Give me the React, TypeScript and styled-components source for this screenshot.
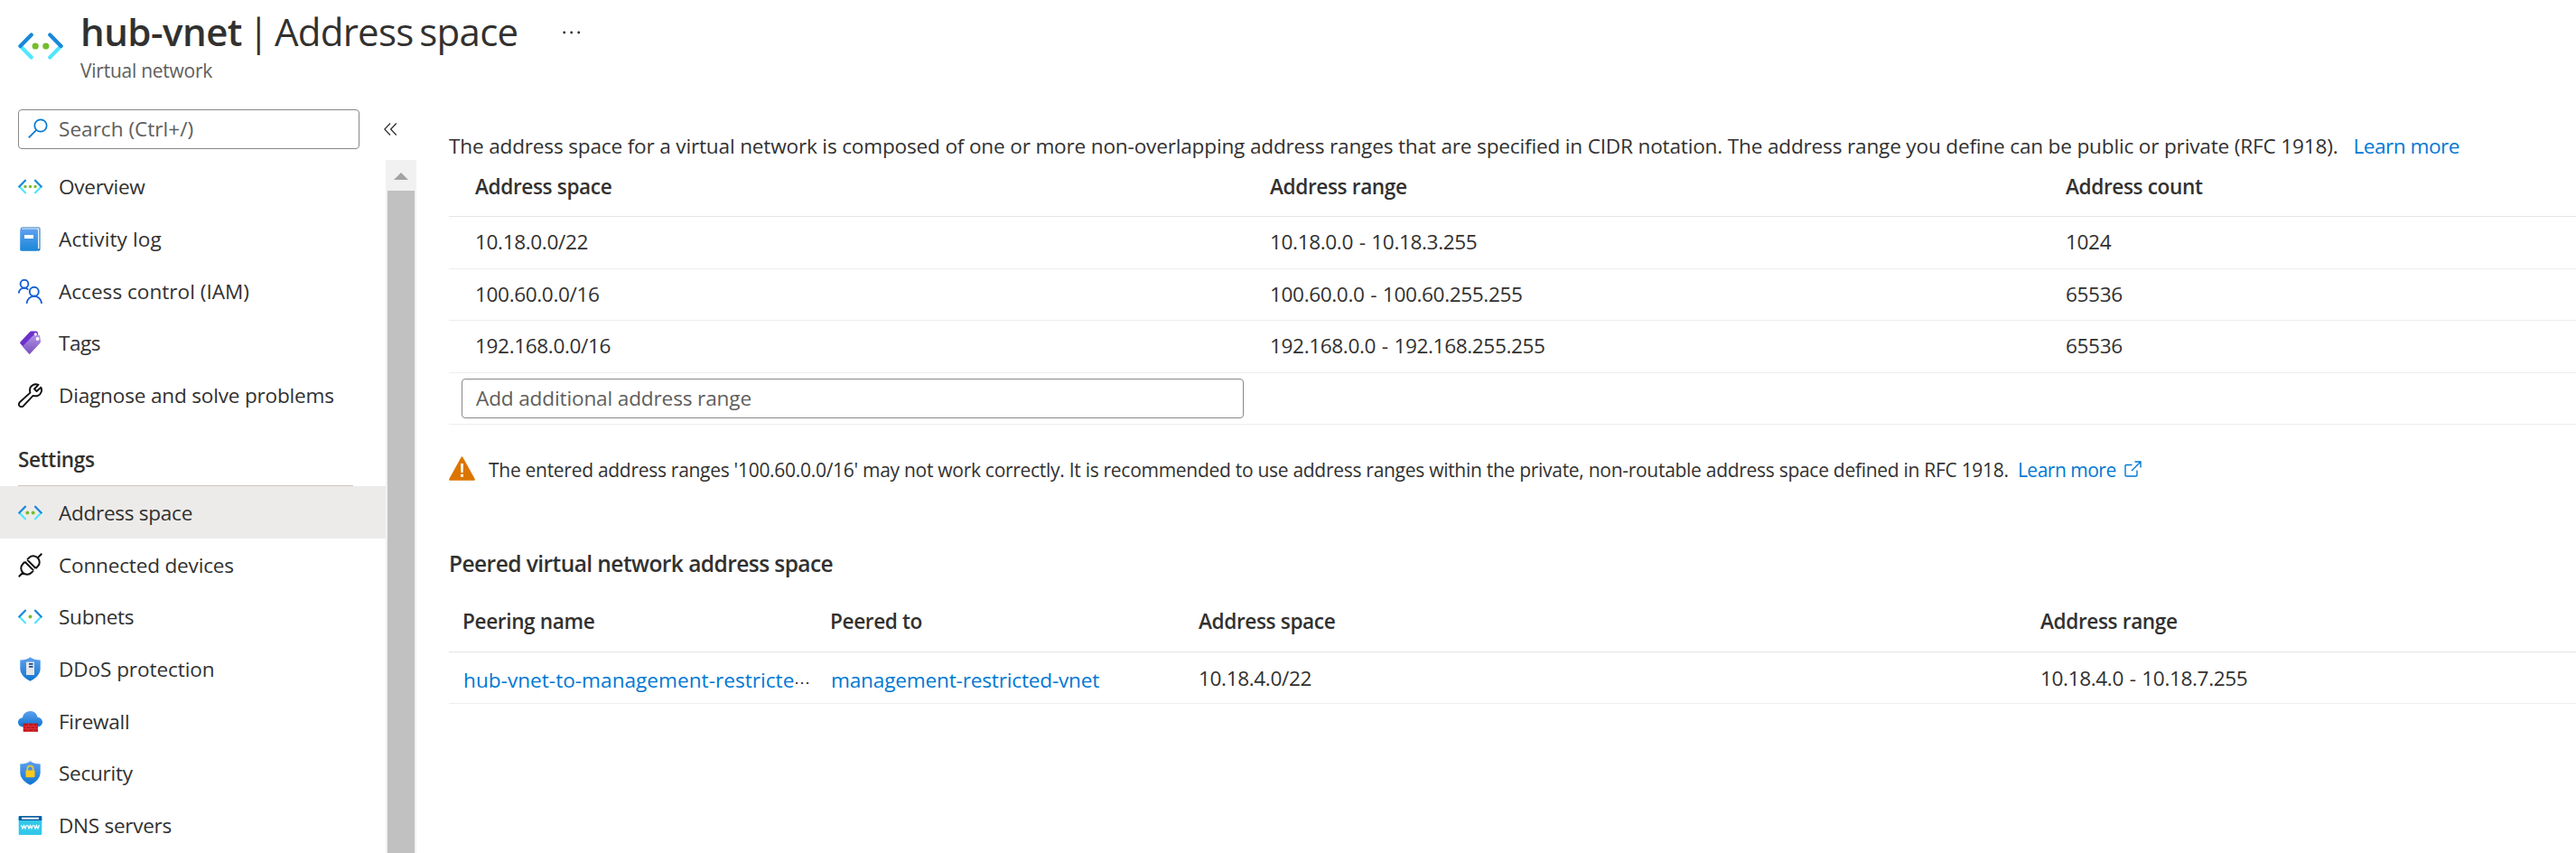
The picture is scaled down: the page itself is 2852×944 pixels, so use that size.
import React from "react";
import styled, { createGlobalStyle } from "styled-components";

const Global = createGlobalStyle`
  * { box-sizing: border-box; }
  body { margin: 0; background: #fff; }
`;

const Page = styled.div`
  width: 2852px;
  height: 944px;
  overflow: hidden;
  display: flex;
  flex-direction: column;
  background: #fff;
  color: #323130;
  font-family: "Open Sans", "Noto Sans", sans-serif;
  font-size: 22.6px;
  letter-spacing: -0.35px;
`;

const Header = styled.header`
  display: flex;
  height: 121px;
  flex: none;
  padding: 8px 0 0 20px;
`;
const HeaderIcon = styled.div`
  width: 69px;
  padding-top: 18px;
  svg { display: block; }
`;
const Titles = styled.div`
  display: flex;
  flex-direction: column;
`;
const Title = styled.h1`
  margin: 0;
  font-size: 42px;
  line-height: 54px;
  font-weight: 400;
  white-space: pre;
  letter-spacing: -0.75px;
  word-spacing: -3.3px;
  b { font-weight: 600; letter-spacing: -0.5px; }
`;
const Subtitle = styled.div`
  font-size: 21px;
  line-height: 28px;
  padding-top: 2px;
  letter-spacing: -0.25px;
  color: #605e5c;
`;
const More = styled.div`
  margin-left: 50px;
  padding-top: 26px;
  svg { display: block; }
`;

const Body = styled.div`
  display: flex;
  flex: 1;
  min-height: 0;
`;
const Sidebar = styled.aside`
  width: 461px;
  flex: none;
  display: flex;
  flex-direction: column;
`;
const SearchRow = styled.div`
  display: flex;
  align-items: center;
  height: 56px;
  padding: 0 0 12px 20px;
  gap: 27px;
`;
const SearchBox = styled.div`
  width: 378px;
  height: 44px;
  border: 1.5px solid #8a8886;
  border-radius: 4px;
  display: flex;
  align-items: center;
  gap: 12px;
  padding: 0 0 2px 10px;
  letter-spacing: 0;
  color: #605e5c;
`;
const NavWrap = styled.div`
  display: flex;
  flex: 1;
  min-height: 0;
`;
const Nav = styled.nav`
  width: 427px;
  padding-top: 1px;
`;
const NavItem = styled.div<{ $active?: boolean; $ls?: number }>`
  display: flex;
  align-items: center;
  gap: 18px;
  height: 57.65px;
  padding-left: 20px;
  letter-spacing: ${(p) => p.$ls ?? -0.3}px;
  background: ${(p) => (p.$active ? "#edebe9" : "transparent")};
  svg { flex: none; }
`;
const Section = styled.div`
  height: 72px;
  margin: 0 36px 0 20px;
  padding-top: 27px;
  line-height: 32px;
  font-weight: 600;
  border-bottom: 1.5px solid #c8c6c4;
`;
const SettingsItem = styled(NavItem)`
  padding-top: 1px;
`;
const Scrollbar = styled.div`
  width: 34px;
  background: #f1f1f1;
  display: flex;
  flex-direction: column;
  padding: 0 2px;
`;
const ScrollArrow = styled.div`
  height: 34px;
  flex: none;
  display: flex;
  justify-content: center;
  padding-top: 14px;
`;
const Thumb = styled.div`
  flex: 1;
  background: #c1c1c1;
`;

const Main = styled.main`
  flex: 1;
  min-width: 0;
  padding: 24px 0 0 36px;
`;
const Text = styled.p<{ $size: number; $ls: number; $top?: number; $bottom?: number }>`
  margin: 0;
  display: flex;
  align-items: center;
  height: 34px;
  padding: ${(p) => p.$top ?? 0}px 0 ${(p) => p.$bottom ?? 0}px;
  white-space: pre;
  font-size: ${(p) => p.$size}px;
  letter-spacing: ${(p) => p.$ls}px;
`;
const Link = styled.a`
  color: #0078d4;
  text-decoration: none;
`;
const MoreLink = styled(Link)`
  letter-spacing: -0.5px;
`;
const Row = styled.div<{ $cols: string; $h: number; $head?: boolean }>`
  display: grid;
  grid-template-columns: ${(p) => p.$cols};
  align-items: center;
  height: ${(p) => p.$h}px;
  border-bottom: 1.5px solid ${(p) => (p.$head ? "#e5e5e5" : "#edeeef")};
  font-weight: ${(p) => (p.$head ? 600 : 400)};
  white-space: nowrap;
`;
const Cell = styled.div<{ $top?: number; $bottom?: number; $link?: boolean }>`
  padding: ${(p) => p.$top ?? 0}px 0 ${(p) => p.$bottom ?? 0}px ${(p) => (p.$link ? 1 : 0)}px;
  letter-spacing: ${(p) => (p.$link ? -0.18 : -0.37)}px;
  word-spacing: 1.2px;
`;
const HeadCell = styled(Cell)`
  word-spacing: 0;
`;
const NameLink = styled(Link)`
  letter-spacing: 0.02px;
`;
const Clip = styled.span`
  font-size: 18px;
`;
const RangeInput = styled.div`
  width: 866px;
  height: 44px;
  margin-left: -15px;
  border: 1.5px solid #8a8886;
  border-radius: 4px;
  padding-left: 15px;
  line-height: 41px;
  letter-spacing: -0.15px;
  color: #605e5c;
`;
const Warning = styled.div`
  display: flex;
  align-items: center;
  gap: 15px;
  margin-top: 30px;
  height: 36px;
`;
const External = styled.span`
  display: inline-flex;
  margin-left: 9px;
`;
const Heading = styled.h2`
  margin: 70px 0 0;
  font-size: 24.5px;
  line-height: 36px;
  font-weight: 600;
  letter-spacing: -0.56px;
`;

const VnetIcon = ({ dots, size = 27 }: { dots: number; size?: number }) => {
  const xs = dots === 1 ? [9] : dots === 2 ? [6.9, 11.1] : [5.3, 9, 12.7];
  return (
    <svg width={size} height={size} viewBox="0 0 18 18" fill="none" strokeWidth="1.5" strokeLinecap="round">
      <path d="M0.9 9 5.3 13.5" stroke="#50e6ff" />
      <path d="M5.3 4.5 0.9 9" stroke="#1988d9" />
      <path d="M17.1 9 12.7 13.5" stroke="#50e6ff" />
      <path d="M12.7 4.5 17.1 9" stroke="#1988d9" />
      {xs.map((x) => (
        <circle key={x} cx={x} cy="9" r={dots === 3 ? 1.1 : 1.3} fill="#76bc2d" />
      ))}
    </svg>
  );
};
const LogIcon = () => (
  <svg width="27" height="27" viewBox="0 0 27 27">
    <defs>
      <linearGradient id="log" x1="0" y1="0" x2="0" y2="1">
        <stop offset="0" stopColor="#5ea0ef" /><stop offset="1" stopColor="#1b87d8" />
      </linearGradient>
    </defs>
    <rect x="3" y="0.5" width="21.5" height="26" rx="1.6" fill="#1a6fb0" />
    <rect x="4" y="1.4" width="19.5" height="23" fill="#e8f4fc" />
    <rect x="2.2" y="2.4" width="19.8" height="24.2" rx="1.4" fill="url(#log)" />
    <rect x="7" y="9" width="10" height="4" fill="#fff" />
  </svg>
);
const PeopleIcon = () => (
  <svg width="27" height="27" viewBox="0 0 27 27" fill="none" stroke="#1560d4" strokeWidth="1.9">
    <circle cx="7" cy="5.2" r="4.4" />
    <path d="M0.9 15.5c0-3.4 2.6-5.7 6-5.7 1.8 0 3.3.6 4.4 1.8" />
    <circle cx="17.8" cy="13.8" r="5" />
    <path d="M9.5 26.8c.4-4.6 3.8-8 8.3-8s7.9 3.4 8.3 8" />
  </svg>
);
const TagIcon = () => (
  <svg width="27" height="27" viewBox="0 0 27 27">
    <defs>
      <linearGradient id="tag" x1="0" y1="0" x2="0" y2="1">
        <stop offset="0" stopColor="#b394e6" /><stop offset="1" stopColor="#7a4fbf" />
      </linearGradient>
    </defs>
    <path d="M13 1.2Q13.6.5 14.5.5L20 .4Q22 .6 22 3V8L8.5 21 2.3 14Q1.8 13.2 2.5 12.5Z" fill="#6d2fcb" />
    <path d="M16.2 5.8Q16.8 5 18 4.9L22.5 4.5Q24 4.5 24.2 6L25 12Q25 13 24.3 13.8L13.3 25.5Q12.6 26.3 12 25.5L5.3 18Q4.9 17.4 5.5 16.8Z" fill="url(#tag)" />
    <circle cx="19.3" cy="3.8" r="1.6" fill="#fff" />
    <circle cx="21.6" cy="9" r="1.9" fill="#fff" />
  </svg>
);
const WrenchIcon = () => (
  <svg width="27" height="27" viewBox="0 0 27 27" fill="none" stroke="#111" strokeWidth="1.9" strokeLinejoin="round">
    <path d="M22.5 1.8C18 .2 13 3 13 7.6C13 9 13.2 9.8 13.4 10.6L2 21C.5 22.5.6 24.4 1.7 25.4C3 26.6 4.8 26.4 6 25.2L16.6 13.9C20 15 24.5 13.8 25.7 9.8C26.3 8 26 6 25.3 4.7L20.6 9L18 6.5Z" />
  </svg>
);
const PlugIcon = () => (
  <svg width="27" height="27" viewBox="0 0 27 27" fill="none" stroke="#111" strokeWidth="2">
    <path d="M.8 26.2 5.5 21.5M21.5 5.5 26.3.8M7.6 9.8 17.2 19.4M10 7.4 19.6 17M7.6 9.8 5 12.5C2.5 15 2.8 19 5.3 21.7 8 24.2 12 24.5 14.5 22L17.2 19.4M10 7.4 12.5 5C15 2.5 19 2.8 21.7 5.3 24.2 8 24.5 12 22 14.5L19.6 17" />
  </svg>
);
const Shield = ({ children }: { children: React.ReactNode }) => (
  <svg width="27" height="27" viewBox="0 0 27 27">
    <defs>
      <linearGradient id="shield" x1="0" y1="0" x2="0" y2="1">
        <stop offset="0" stopColor="#5ea0ef" /><stop offset="1" stopColor="#0f75cf" />
      </linearGradient>
    </defs>
    <path d="M13.5.3C16.5 2.8 20 3.5 24.7 3.5V13C24.7 20 18 24.5 13.5 26.8 9 24.5 2.3 20 2.3 13V3.5C7 3.5 10.5 2.8 13.5.3Z" fill="url(#shield)" />
    {children}
  </svg>
);
const DdosIcon = () => (
  <Shield>
    <rect x="9" y="5.5" width="9" height="14.5" fill="#e6e6e6" />
    <rect x="12" y="7" width="4.5" height="1.7" fill="#114a8b" />
    <rect x="12" y="10" width="4.5" height="1.7" fill="#114a8b" />
  </Shield>
);
const SecurityIcon = () => (
  <Shield>
    <path d="M10.3 11V8.8a3.2 3.2 0 0 1 6.4 0V11" fill="none" stroke="#e8c93a" strokeWidth="1.7" />
    <rect x="8.5" y="10.5" width="10" height="7.8" rx=".8" fill="#fbc91a" />
  </Shield>
);
const FirewallIcon = () => (
  <svg width="27" height="27" viewBox="0 0 27 27">
    <path d="M5.5 19.5C2.3 19.5 0 17.3 0 14.3 0 11.5 2.2 9.5 5 9.2 5.6 5 9 2 13.5 2 17.7 2 20.7 4.6 21.6 8.7 24.7 9 27 11.2 27 14.1 27 17.2 24.5 19.5 21.3 19.5Z" fill="url(#shield)" />
    <rect x="5.7" y="15.6" width="16.3" height="9.2" fill="#c4141b" />
    <path d="M6 18.7H22M6 21.7H22M11.5 15.6V18.7M17 15.6V18.7M9 18.7V21.7M14 18.7V21.7M19 18.7V21.7M11.5 21.7V24.8M17 21.7V24.8" stroke="#e8555a" strokeWidth=".5" />
  </svg>
);
const DnsIcon = () => (
  <svg width="27" height="27" viewBox="0 0 27 27">
    <rect x=".7" y="3" width="25.6" height="21" rx="1" fill="#32c8ea" />
    <path d="M.7 8V4a1 1 0 0 1 1-1H25.3a1 1 0 0 1 1 1V8Z" fill="#0b5fa5" />
    <rect x="4" y="4.7" width="19" height="1.9" fill="#fff" />
    <path d="M3.5 13 5 17 6.500 13.5 8 17 9.5 13M10.5 13 12 17 13.5 13.5 15 17 16.5 13M17.5 13 19 17 20.5 13.5 22 17 23.5 13" fill="none" stroke="#fff" strokeWidth="1.2" />
  </svg>
);

const TOP = [
  { label: "Overview", icon: <VnetIcon dots={3} /> },
  { label: "Activity log", icon: <LogIcon />, ls: 0.1 },
  { label: "Access control (IAM)", icon: <PeopleIcon />, ls: 0 },
  { label: "Tags", icon: <TagIcon />, ls: -0.5 },
  { label: "Diagnose and solve problems", icon: <WrenchIcon />, ls: -0.2 },
];
const SETTINGS = [
  { label: "Address space", icon: <VnetIcon dots={2} />, active: true },
  { label: "Connected devices", icon: <PlugIcon />, ls: -0.2 },
  { label: "Subnets", icon: <VnetIcon dots={1} /> },
  { label: "DDoS protection", icon: <DdosIcon />, ls: -0.1 },
  { label: "Firewall", icon: <FirewallIcon /> },
  { label: "Security", icon: <SecurityIcon /> },
  { label: "DNS servers", icon: <DnsIcon /> },
];
const RANGES = [
  ["10.18.0.0/22", "10.18.0.0 - 10.18.3.255", "1024"],
  ["100.60.0.0/16", "100.60.0.0 - 100.60.255.255", "65536"],
  ["192.168.0.0/16", "192.168.0.0 - 192.168.255.255", "65536"],
];
const SPACE_COLS = "29px 880px 881px 1fr";
const PEER_COLS = "15px 407px 408px 932px 1fr";

export default function App() {
  return (
    <Page>
      <Global />
      <Header>
        <HeaderIcon><VnetIcon dots={2} size={50} /></HeaderIcon>
        <Titles>
          <Title><b>hub-vnet</b> | Address space</Title>
          <Subtitle>Virtual network</Subtitle>
        </Titles>
        <More>
          <svg width="20" height="4" viewBox="0 0 20 4" fill="#323130">
            <circle cx="1.7" cy="2" r="1.4" /><circle cx="9.7" cy="2" r="1.4" /><circle cx="17.7" cy="2" r="1.4" />
          </svg>
        </More>
      </Header>
      <Body>
        <Sidebar>
          <SearchRow>
            <SearchBox>
              <svg width="22" height="22" viewBox="0 0 22 22" fill="none" stroke="#0078d4" strokeWidth="1.7">
                <circle cx="14" cy="8" r="6.7" /><path d="M9.3 12.8.8 21.3" />
              </svg>
              Search (Ctrl+/)
            </SearchBox>
            <svg width="15" height="14" viewBox="0 0 15 14" fill="none" stroke="#323130" strokeWidth="1.3">
              <path d="M7 .5.8 7 7 13.5M13.8.5 7.6 7 13.8 13.5" />
            </svg>
          </SearchRow>
          <NavWrap>
            <Nav>
              {TOP.map((i) => <NavItem key={i.label} $ls={i.ls}>{i.icon}{i.label}</NavItem>)}
              <Section>Settings</Section>
              {SETTINGS.map((i) => <SettingsItem key={i.label} $active={i.active} $ls={i.ls}>{i.icon}{i.label}</SettingsItem>)}
            </Nav>
            <Scrollbar>
              <ScrollArrow>
                <svg width="16" height="8" viewBox="0 0 16 8"><path d="M0 8 8 0 16 8Z" fill="#a3a3a3" /></svg>
              </ScrollArrow>
              <Thumb />
            </Scrollbar>
          </NavWrap>
        </Sidebar>
        <Main>
          <Text $size={22.6} $ls={-0.18} $bottom={2}>
            The address space for a virtual network is composed of one or more non-overlapping address ranges that are specified in CIDR notation. The address range you define can be public or private (RFC 1918).{"   "}
            <MoreLink>Learn more</MoreLink>
          </Text>
          <Row $cols={SPACE_COLS} $h={61} $head>
            <span />
            <HeadCell $bottom={5}>Address space</HeadCell>
            <HeadCell $bottom={5}>Address range</HeadCell>
            <HeadCell $bottom={5}>Address count</HeadCell>
          </Row>
          {RANGES.map((r) => (
            <Row key={r[0]} $cols={SPACE_COLS} $h={57.6}>
              <span />{r.map((c) => <Cell key={c} $bottom={1}>{c}</Cell>)}
            </Row>
          ))}
          <Row $cols={SPACE_COLS} $h={57.6}>
            <span /><RangeInput>Add additional address range</RangeInput>
          </Row>
          <Warning>
            <svg width="29" height="27" viewBox="0 0 29 27">
              <path d="M13.6.9Q14.5-.4 15.4.9L28.7 25Q29.2 26.7 27.8 26.7H1.2Q-.2 26.7.3 25Z" fill="#db7500" />
              <path d="M13 8H16L15.6 18H13.4ZM13 19.8H16V22.8H13Z" fill="#fff" />
            </svg>
            <Text $size={21} $ls={-0.285} $top={3}>
              The entered address ranges '100.60.0.0/16' may not work correctly. It is recommended to use address ranges within the private, non-routable address space defined in RFC 1918.{" "}
              <MoreLink> Learn more</MoreLink>
              <External>
                <svg width="19" height="19" viewBox="0 0 19 19" fill="none" stroke="#0078d4" strokeWidth="1.4">
                  <path d="M8.5 4.5H2.2Q1 4.5 1 5.7V15.8Q1 17 2.2 17H12.8Q14 17 14 15.8V10.5M11.5 1H18V7.5M18 1 8 11" />
                </svg>
              </External>
            </Text>
          </Warning>
          <Heading>Peered virtual network address space</Heading>
          <Row $cols={PEER_COLS} $h={79.6} $head>
            <span />
            <HeadCell $top={12}>Peering name</HeadCell>
            <HeadCell $top={12}>Peered to</HeadCell>
            <HeadCell $top={12}>Address space</HeadCell>
            <HeadCell $top={12}>Address range</HeadCell>
          </Row>
          <Row $cols={PEER_COLS} $h={57}>
            <span />
            <Cell $link $top={5}><NameLink>hub-vnet-to-management-restricte</NameLink><Clip>⋯</Clip></Cell>
            <Cell $link $top={5}><Link>management-restricted-vnet</Link></Cell>
            <Cell $top={2}>10.18.4.0/22</Cell>
            <Cell $top={2}>10.18.4.0 - 10.18.7.255</Cell>
          </Row>
        </Main>
      </Body>
    </Page>
  );
}
